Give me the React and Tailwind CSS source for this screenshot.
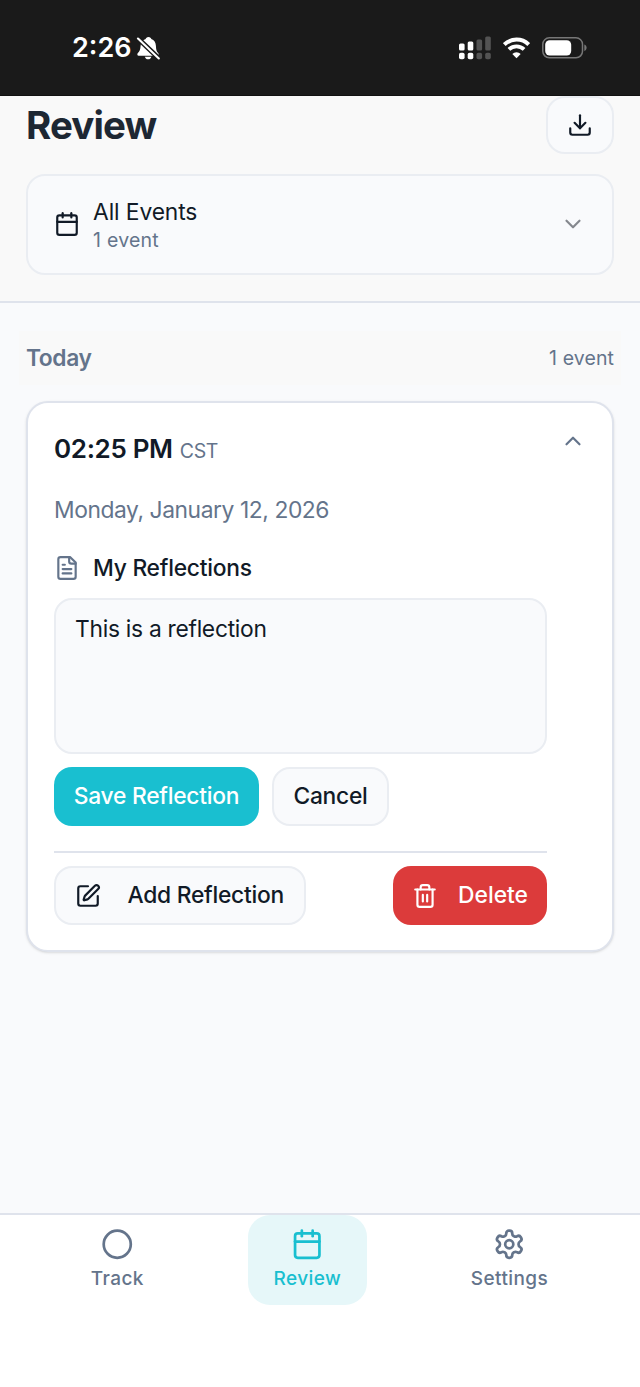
import React, { useState } from 'react';
import { Calendar, ChevronDown, ChevronUp, Circle, SquarePen, Trash2 } from 'lucide-react';

const StrokeIcon = ({ size = 26, className, children }) => (
  <svg
    width={size}
    height={size}
    viewBox="0 0 24 24"
    fill="none"
    stroke="currentColor"
    strokeWidth="2"
    strokeLinecap="round"
    strokeLinejoin="round"
    className={className}
  >
    {children}
  </svg>
);

const DownloadIcon = (props) => (
  <StrokeIcon {...props}>
    <path d="M21 15v4a2 2 0 0 1-2 2H5a2 2 0 0 1-2-2v-4" />
    <path d="M7 10l5 5 5-5" />
    <path d="M12 15V3" />
  </StrokeIcon>
);

const DocumentIcon = (props) => (
  <StrokeIcon {...props}>
    <path d="M15 2H6a2 2 0 0 0-2 2v16a2 2 0 0 0 2 2h12a2 2 0 0 0 2-2V7Z" />
    <path d="M14 2v4a2 2 0 0 0 2 2h4" />
    <path d="M10 9H8" />
    <path d="M16 13H8" />
    <path d="M16 17H8" />
  </StrokeIcon>
);

const GearIcon = (props) => (
  <StrokeIcon {...props}>
    <path d="M12.22 2h-.44a2 2 0 0 0-2 2v.18a2 2 0 0 1-1 1.73l-.43.25a2 2 0 0 1-2 0l-.15-.08a2 2 0 0 0-2.73.73l-.22.38a2 2 0 0 0 .73 2.73l.15.1a2 2 0 0 1 1 1.72v.51a2 2 0 0 1-1 1.74l-.15.09a2 2 0 0 0-.73 2.73l.22.38a2 2 0 0 0 2.73.73l.15-.08a2 2 0 0 1 2 0l.43.25a2 2 0 0 1 1 1.73V20a2 2 0 0 0 2 2h.44a2 2 0 0 0 2-2v-.18a2 2 0 0 1 1-1.73l.43-.25a2 2 0 0 1 2 0l.15.08a2 2 0 0 0 2.73-.73l.22-.39a2 2 0 0 0-.73-2.73l-.15-.08a2 2 0 0 1-1-1.74v-.5a2 2 0 0 1 1-1.74l.15-.09a2 2 0 0 0 .73-2.73l-.22-.38a2 2 0 0 0-2.73-.73l-.15.08a2 2 0 0 1-2 0l-.43-.25a2 2 0 0 1-1-1.73V4a2 2 0 0 0-2-2z" />
    <circle cx="12" cy="12" r="3" />
  </StrokeIcon>
);

const tabs = [
  { id: 'track', label: 'Track', icon: Circle },
  { id: 'review', label: 'Review', icon: Calendar },
  { id: 'settings', label: 'Settings', icon: GearIcon },
];

const StatusBar = () => (
  <div className="flex h-24 shrink-0 items-center justify-between border-b border-[#111] bg-[#1a1a1a] pr-[53px] pl-[72px] text-white">
    <div className="flex items-center gap-[4px]">
      <span className="text-[27px] leading-8 font-semibold">2:26</span>
      <svg width="24" height="26" viewBox="0 0 24 26" fill="none">
        <path
          d="M12.5 2c-1.700 0-2.600 1-2.800 2.100C6.600 5.100 4.800 7.500 4.600 10.800c-.2 4-1.100 5.600-2.700 7.200-1 1-.7 2.700.8 2.700h18.600c1.500 0 1.800-1.700.8-2.700-1.600-1.600-2-3.200-2.200-7.200-.2-3.300-1.600-5.700-4.600-6.700C15.100 3 14.200 2 12.500 2z"
          fill="currentColor"
        />
        <path d="M8.800 21.700h6.600c-.5 1.700-1.700 2.600-3.300 2.600s-2.800-.9-3.300-2.600z" fill="currentColor" />
        <path d="M1.500 3l21.500 20.500" stroke="#1a1a1a" strokeWidth="5" />
        <path d="M2 3.500l20.800 20" stroke="currentColor" strokeWidth="2.1" strokeLinecap="round" />
      </svg>
    </div>

    <div className="flex items-center">
      <svg width="32" height="24" viewBox="0 0 32 24" fill="currentColor">
        <rect x="0" y="7.5" width="5.6" height="7" rx="1.5" />
        <rect x="8.7" y="5.5" width="5.6" height="9" rx="1.5" />
        <rect x="17.5" y="3.5" width="5.6" height="11" rx="1.5" opacity="0.25" />
        <rect x="26.2" y="0.5" width="5.6" height="14" rx="1.5" opacity="0.25" />
        <rect x="0" y="16.7" width="5.6" height="6.6" rx="1.8" />
        <rect x="8.7" y="16.7" width="5.6" height="6.6" rx="1.8" />
        <rect x="17.5" y="16.7" width="5.6" height="6.6" rx="1.8" opacity="0.25" />
        <rect x="26.2" y="16.7" width="5.6" height="6.6" rx="1.8" opacity="0.25" />
      </svg>
      <svg className="ml-3" width="27" height="22" viewBox="0 0 27 22" fill="none" stroke="currentColor">
        <path d="M1.3 7.6a17.4 17.4 0 0 1 24.4 0" strokeWidth="4" />
        <path d="M5.9 12.4a10.9 10.9 0 0 1 15.2 0" strokeWidth="3.8" />
        <path d="M13.5 21.2l-4.2-4.2a6 6 0 0 1 8.4 0z" fill="currentColor" stroke="none" />
      </svg>
      <svg className="ml-3" width="45" height="22" viewBox="0 0 45 22" fill="none">
        <rect x="0.8" y="0.8" width="39.7" height="20" rx="6.5" stroke="#777" strokeWidth="1.5" />
        <rect x="3.2" y="3.2" width="26" height="15.3" rx="4.5" fill="currentColor" />
        <path d="M42.3 7.5c1.5.6 2.300 1.800 2.300 3.300s-.8 2.700-2.300 3.300z" fill="#777" />
      </svg>
    </div>
  </div>
);

const Header = () => (
  <header className="h-[207px] shrink-0 border-b-2 border-[#dfe3ec] bg-[#f9f9f9] px-[26px]">
    <div className="flex h-[58px] items-center justify-between">
      <h1 className="text-[38.5px] leading-[46px] font-bold tracking-[-0.9px] text-[#1d2733]">Review</h1>
      <button
        type="button"
        aria-label="Export"
        className="flex h-[58px] w-[68px] items-center justify-center rounded-[19px] border-2 border-[#eaedf2] bg-[#f9fafc] text-[#111a27]"
      >
        <DownloadIcon />
      </button>
    </div>

    <button
      type="button"
      className="mt-5 flex h-[101px] w-full items-center rounded-[19px] border-2 border-[#eaedf2] bg-[#f9fafc] px-[26px] pb-[2px] text-left text-[#111a27]"
    >
      <Calendar size={26} />
      <span className="ml-[13px] flex-1">
        <span className="block text-[22.8px] leading-[33px] tracking-[-0.1px]">All Events</span>
        <span className="block text-[19.5px] leading-[24px] tracking-[0.25px] text-[#64748b]">1 event</span>
      </span>
      <ChevronDown size={26} className="text-[#85888e]" />
    </button>
  </header>
);

const EventCard = () => {
  const [text, setText] = useState('This is a reflection');

  return (
    <article className="mt-4 flex h-[551px] rounded-[22px] border-2 border-[#dfe3ec] bg-white px-[26px] pt-[24px] shadow-sm">
      <div className="w-[493px]">
        <div className="flex h-[44px] items-baseline gap-[7px]">
          <span className="text-[26px] leading-[44px] font-semibold tracking-[-0.35px] text-[#111a27]">02:25 PM</span>
          <span className="text-[19.5px] tracking-[-0.3px] text-[#64748b]">CST</span>
        </div>
        <p className="mt-[23px] text-[22.8px] leading-8 tracking-[-0.42px] text-[#64748b]">
          Monday, January 12, 2026
        </p>

        <div className="mt-[26px] flex h-8 items-center gap-[13px]">
          <DocumentIcon className="text-[#64748b]" />
          <h3 className="text-[22.8px] leading-8 font-medium tracking-[-0.25px] text-[#111a27]">My Reflections</h3>
        </div>
        <textarea
          value={text}
          onChange={(e) => setText(e.target.value)}
          className="mt-[14px] block h-[156px] w-full resize-none rounded-[18px] border-2 border-[#eaedf2] bg-[#f9fafc] px-[19px] py-[13px] text-[22.8px] leading-8 tracking-[-0.28px] text-[#111a27] outline-none"
        />

        <div className="mt-[13px] flex gap-[13px] text-[22.8px] font-medium tracking-[-0.25px]">
          <button type="button" className="h-[59px] w-[205px] rounded-[18px] bg-[#19bfd0] text-white">
            Save Reflection
          </button>
          <button
            type="button"
            className="h-[59px] w-[117px] rounded-[18px] border-2 border-[#eaedf2] bg-[#f9fafc] text-[#111a27]"
          >
            Cancel
          </button>
        </div>

        <div className="mt-[25px] flex justify-between border-t-2 border-[#dfe3ec] pt-[13px] text-[22.8px] font-medium">
          <button
            type="button"
            className="flex h-[59px] w-[252px] items-center justify-between rounded-[18px] border-2 border-[#eaedf2] bg-[#f9fafc] pr-5 pl-[19px] tracking-[-0.25px] text-[#111a27]"
          >
            <SquarePen size={26} />
            Add Reflection
          </button>
          <button
            type="button"
            className="flex h-[59px] w-[154px] items-center justify-between rounded-[18px] bg-[#dc3b3b] px-[19px] text-white"
          >
            <Trash2 size={26} />
            Delete
          </button>
        </div>
      </div>
      <ChevronUp size={26} className="mt-[1px] ml-auto text-[#64748b]" />
    </article>
  );
};

const BottomNav = ({ active, onChange }) => (
  <nav className="flex h-[174px] shrink-0 items-start justify-around border-t-2 border-[#dfe3ec] bg-white pr-[27px] pl-[26px]">
    {tabs.map(({ id, label, icon: Icon }) => (
      <button
        key={id}
        type="button"
        onClick={() => onChange(id)}
        className={`flex h-[90px] flex-col items-center rounded-[22px] px-[25.5px] pt-[13px] ${
          active === id ? 'bg-[#e6f7f9] text-[#19bfd0]' : 'text-[#64748b]'
        }`}
      >
        <Icon size={32.5} />
        <span className="mt-[4px] text-[19px] leading-7 font-medium tracking-[0.4px]">{label}</span>
      </button>
    ))}
  </nav>
);

const App = () => {
  const [tab, setTab] = useState('review');

  return (
    <div className="flex h-[1387px] w-[640px] flex-col overflow-hidden bg-[#f9fafc] font-['Inter',sans-serif]">
      <StatusBar />
      <Header />
      <main className="flex-1 px-[26px] pt-[28px]">
        <div className="-mx-[7px] flex h-[54px] items-center justify-between bg-[#f9f9f9] px-[7px] pt-[1px] text-[#64748b]">
          <h2 className="text-[22.8px] font-semibold tracking-[-0.4px]">Today</h2>
          <span className="text-[19.5px] tracking-[0.1px]">1 event</span>
        </div>
        <EventCard />
      </main>
      <BottomNav active={tab} onChange={setTab} />
    </div>
  );
};

export default App;
